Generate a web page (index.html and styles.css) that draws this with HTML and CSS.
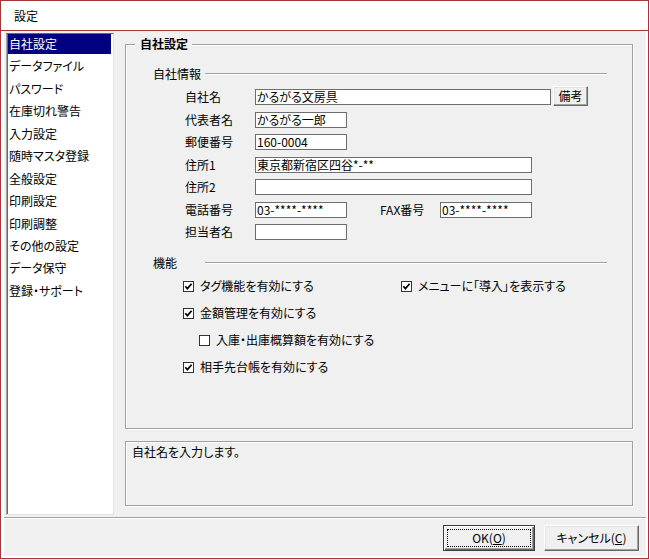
FILE: index.html
```html
<!DOCTYPE html>
<html lang="ja">
<head>
<meta charset="utf-8">
<title>設定</title>
<link rel="stylesheet" href="styles.css">
</head>
<body>
<div class="window">
  <div class="titlebar">設定</div>
  <div class="client">
    <div class="main">
      <ul class="nav">
        <li class="selected">自社設定</li>
        <li>データファイル</li>
        <li>パスワード</li>
        <li>在庫切れ警告</li>
        <li>入力設定</li>
        <li>随時マスタ登録</li>
        <li>全般設定</li>
        <li>印刷設定</li>
        <li>印刷調整</li>
        <li>その他の設定</li>
        <li>データ保守</li>
        <li>登録・サポート</li>
      </ul>
      <div class="panel">
        <fieldset class="group">
          <legend>自社設定</legend>
          <div class="subhead"><span>自社情報</span><i></i></div>
          <div class="form">
            <div class="row"><label>自社名</label><div class="field w-name">かるがる文房具</div><button class="btn memo">備考</button></div>
            <div class="row"><label>代表者名</label><div class="field w-short">かるがる一郎</div></div>
            <div class="row"><label>郵便番号</label><div class="field w-short">160-0004</div></div>
            <div class="row"><label>住所1</label><div class="field w-addr">東京都新宿区四谷*-**</div></div>
            <div class="row"><label>住所2</label><div class="field w-addr"></div></div>
            <div class="row"><label>電話番号</label><div class="field w-short">03-****-****</div><label class="fax">FAX番号</label><div class="field w-short">03-****-****</div></div>
            <div class="row"><label>担当者名</label><div class="field w-short"></div></div>
          </div>
          <div class="subhead func"><span>機能</span><i></i></div>
          <div class="checks">
            <div class="check-row">
              <div class="check first"><svg class="box" width="11" height="11" viewBox="0 0 11 11"><rect x="0.5" y="0.5" width="10" height="10" fill="#fff" stroke="#333"/><polyline points="2.3,5.2 4.4,7.6 8.6,2.8" fill="none" stroke="#000" stroke-width="1.7"/></svg><span>タグ機能を有効にする</span></div>
              <div class="check"><svg class="box" width="11" height="11" viewBox="0 0 11 11"><rect x="0.5" y="0.5" width="10" height="10" fill="#fff" stroke="#333"/><polyline points="2.3,5.2 4.4,7.6 8.6,2.8" fill="none" stroke="#000" stroke-width="1.7"/></svg><span>メニューに「導入」を表示する</span></div>
            </div>
            <div class="check-row">
              <div class="check"><svg class="box" width="11" height="11" viewBox="0 0 11 11"><rect x="0.5" y="0.5" width="10" height="10" fill="#fff" stroke="#333"/><polyline points="2.3,5.2 4.4,7.6 8.6,2.8" fill="none" stroke="#000" stroke-width="1.7"/></svg><span>金額管理を有効にする</span></div>
            </div>
            <div class="check-row indent">
              <div class="check"><svg class="box" width="11" height="11" viewBox="0 0 11 11"><rect x="0.5" y="0.5" width="10" height="10" fill="#fff" stroke="#333"/></svg><span>入庫・出庫概算額を有効にする</span></div>
            </div>
            <div class="check-row">
              <div class="check"><svg class="box" width="11" height="11" viewBox="0 0 11 11"><rect x="0.5" y="0.5" width="10" height="10" fill="#fff" stroke="#333"/><polyline points="2.3,5.2 4.4,7.6 8.6,2.8" fill="none" stroke="#000" stroke-width="1.7"/></svg><span>相手先台帳を有効にする</span></div>
            </div>
          </div>
        </fieldset>
        <div class="desc">自社名を入力します。</div>
      </div>
    </div>
    <div class="sep"></div>
    <div class="footer">
      <button class="btn ok">OK(<u>O</u>)</button>
      <button class="btn cancel">キャンセル(<u>C</u>)</button>
    </div>
  </div>
</div>
</body>
</html>
```

FILE: styles.css
```css
html, body {
  margin: 0;
  padding: 0;
  background: #fff;
}

body {
  font-family: "Noto Sans CJK JP", "Noto Sans", "Liberation Sans", sans-serif;
  font-size: 12px;
  color: #000;
  font-feature-settings: "palt";
}

.window {
  width: 649px;
  height: 559px;
  box-sizing: border-box;
  border: 1px solid #a93636;
  padding: 0 2px 2px 3px;
  background: #fff;
  display: flex;
  flex-direction: column;
}

.titlebar {
  flex: none;
  height: 29px;
  line-height: 29px;
  margin: 0 -2px 0 -3px;
  padding-left: 13px;
  border-bottom: 1px solid #a93636;
}

.client {
  flex: 1;
  background: #f0f0f0;
  display: flex;
  flex-direction: column;
}

.main {
  flex: none;
  height: 486px;
  display: flex;
}

.nav {
  list-style: none;
  margin: 2px 0 0 2px;
  padding: 0 2px 0 1px;
  width: 108px;
  height: 482px;
  box-sizing: border-box;
  background: #fff;
  border: 1px solid;
  border-color: #696969 #e3e3e3 #e3e3e3 #a0a0a0;
  box-shadow: inset 1px 0 #696969;
}

.nav li {
  height: 20px;
  line-height: 20px;
  margin-bottom: 2.45px;
  padding-left: 1px;
  white-space: nowrap;
}

.nav li.selected {
  background: #000080;
  color: #fff;
}

.panel {
  margin-left: 11px;
  width: 508px;
  padding-top: 6px;
  display: flex;
  flex-direction: column;
}

.group {
  flex: 1;
  margin: 0;
  min-width: 0;
  padding: 16px 25px 0 27px;
  border: 1px solid #a0a0a0;
  box-shadow: inset 1px 1px #fff, 1px 1px #fff;
}

.group legend {
  font-weight: bold;
  line-height: 14px;
  padding: 0 4px 0 5px;
  margin-left: -18px;
  background: #f0f0f0;
}

.subhead {
  display: flex;
  align-items: center;
  height: 14px;
  line-height: 14px;
}

.subhead span {
  flex: none;
  width: 52px;
  white-space: nowrap;
}

.subhead i {
  flex: 1;
  height: 0;
  border-top: 1px solid #a0a0a0;
  border-bottom: 1px solid #fff;
}

.subhead.func {
  margin-top: 16px;
}

.form {
  margin-top: 8px;
  padding-left: 32px;
  display: flex;
  flex-direction: column;
  gap: 6.5px;
}

.row {
  display: flex;
  align-items: center;
  height: 16px;
}

.row label {
  flex: none;
  width: 70px;
  line-height: 16px;
  white-space: nowrap;
}

.row label.fax {
  margin-left: 33px;
  width: 60px;
}

.field {
  flex: none;
  box-sizing: border-box;
  height: 16px;
  border: 1px solid #6e6e6e;
  background: #fff;
  line-height: 14px;
  padding: 0 1px;
  white-space: nowrap;
  overflow: hidden;
}

.w-name { width: 296px; }
.w-short { width: 92px; }
.w-addr { width: 277px; }

.btn {
  font-family: inherit;
  font-size: 12px;
  font-feature-settings: "palt";
  color: #000;
  background: #f0f0f0;
  padding: 0;
  box-sizing: border-box;
  border: 1px solid;
  border-color: #fff #696969 #696969 #fff;
  box-shadow: inset -1px -1px #a0a0a0, inset 1px 1px #e3e3e3;
  border-radius: 0;
  line-height: 14px;
}

.btn.memo {
  flex: none;
  width: 35px;
  height: 20px;
  margin: 0 0 2px 2px;
}

.checks {
  margin-top: 9px;
  padding-left: 30px;
  display: flex;
  flex-direction: column;
  gap: 13px;
}

.check-row {
  display: flex;
  height: 14px;
}

.check-row.indent {
  padding-left: 16px;
}

.check {
  display: flex;
  align-items: center;
  gap: 6px;
  line-height: 14px;
  white-space: nowrap;
}

.check.first {
  width: 218px;
}

.box {
  flex: none;
  display: block;
}

.desc {
  flex: none;
  margin: 12px 0 11px;
  height: 65px;
  box-sizing: border-box;
  border: 1px solid #a0a0a0;
  box-shadow: inset 1px 1px #fff, 1px 1px #fff;
  padding: 3px 6px;
  line-height: 14px;
}

.sep {
  flex: none;
  height: 0;
  border-top: 1px solid #a0a0a0;
  border-bottom: 1px solid #fff;
}

.footer {
  flex: 1;
  display: flex;
  justify-content: flex-end;
  align-items: flex-start;
  gap: 9px;
  padding: 6px 7px 0 0;
}

.btn.ok {
  width: 92px;
  height: 26px;
  border-color: #3c3c3c;
  box-shadow: inset 1px 1px #fff, inset -1px -1px #696969, inset -2px -2px #a0a0a0;
  outline: 1px dotted #000;
  outline-offset: -5px;
}

.btn.cancel {
  width: 95px;
  height: 26px;
}
```
